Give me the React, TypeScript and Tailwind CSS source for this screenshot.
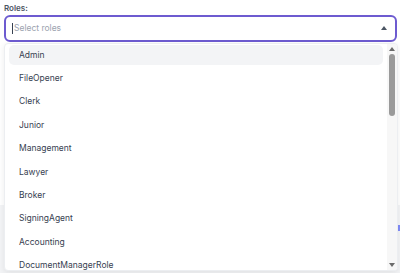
import React from 'react';

const roles = [
  'Admin',
  'FileOpener',
  'Clerk',
  'Junior',
  'Management',
  'Lawyer',
  'Broker',
  'SigningAgent',
  'Accounting',
  'DocumentManagerRole',
];

export default function App() {
  return (
    <div className="relative w-[400px] h-[273px] overflow-hidden bg-white text-[#374151]" style={{ fontFamily: 'Inter, "Noto Sans", sans-serif' }}>
      <div className="px-[4px] pt-[2px]">
        <label className="block text-[8px] font-semibold leading-[12px] text-[#4b5563]">Roles:</label>
        <div className="mt-[1px] h-[27px] w-[393px] rounded-[6px] border-2 border-[#6d5bd0] flex items-center pl-[6px] pr-[8px]">
          <span className="h-[11px] w-px bg-[#374151]" />
          <span className="flex-1 text-[8.5px] text-[#9ca3af] pl-[1px]">Select roles</span>
          <svg width="6" height="4" viewBox="0 0 6 4" className="mb-[1px]">
            <path d="M0 4 L3 0 L6 4 Z" fill="#4b5563" />
          </svg>
        </div>
      </div>

      {/* content behind the popover */}
      <div className="mt-[163px] h-[80px] bg-[#f3f4f6] flex justify-end pt-[20px]">
        <span className="w-[2px] h-[6px] bg-[#818cf8]" />
      </div>

      {/* popover */}
      <div className="absolute left-[4px] top-[43px] w-[394px] h-[228px] bg-white rounded-[4px] border border-[#eceef1] shadow-[0_2px_6px_rgba(0,0,0,0.08)] flex overflow-hidden">
        <ul className="flex-1 flex flex-col gap-[3.4px] pl-[4px] pr-[4px] pt-[1px]">
          {roles.map((r, i) => (
            <li
              key={r}
              className={`h-[20px] shrink-0 flex items-center pl-[10px] rounded-[5px] text-[8.5px] text-[#374151] ${i === 0 ? 'bg-[#f3f4f6]' : ''}`}
            >
              {r}
            </li>
          ))}
        </ul>
        <div className="w-[10px] bg-[#f7f7f7] flex flex-col items-center pt-[3px] pb-[3px]">
          <svg width="6" height="4" viewBox="0 0 6 4">
            <path d="M0 4 L3 0 L6 4 Z" fill="#6b6b6b" />
          </svg>
          <div className="mt-[3px] w-[6px] h-[62px] rounded-full bg-[#9a9a9a]" />
          <div className="flex-1" />
          <svg width="6" height="4" viewBox="0 0 6 4">
            <path d="M0 0 L6 0 L3 4 Z" fill="#6b6b6b" />
          </svg>
        </div>
      </div>
    </div>
  );
}
